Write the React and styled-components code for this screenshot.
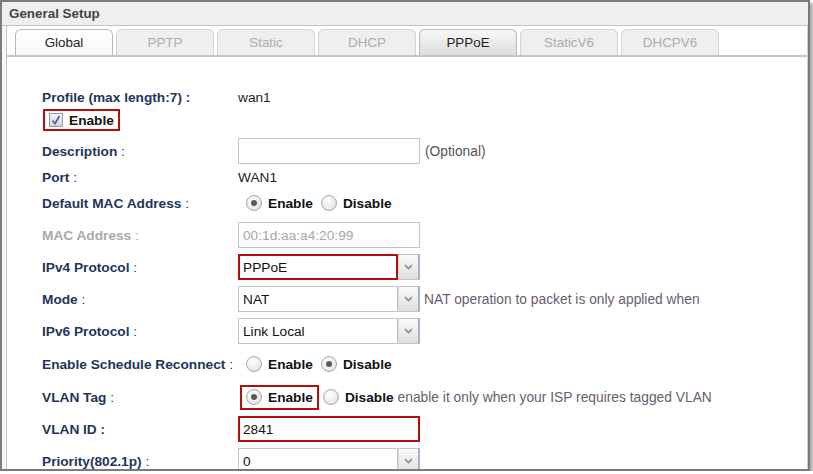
import React from "react"
import styled, { createGlobalStyle } from "styled-components"

const GlobalStyle = createGlobalStyle`
  html, body {
    margin: 0;
    padding: 0;
    background: #ffffff;
    font-family: "Liberation Sans", Arial, sans-serif;
  }
`

const Frame = styled.div`
  box-sizing: border-box;
  width: 810px;
  height: 471px;
  border: 2px solid #7b7b7b;
  box-shadow: 3px 3px 3px #a8a8a8;
  background: #f6f6f6;
  overflow: hidden;
  display: flex;
  flex-direction: column;
`

const TitleBar = styled.div`
  height: 23px;
  flex: none;
  background: #efefef;
  border-bottom: 1px solid #c2c2c2;
  padding-left: 7px;
  display: flex;
  align-items: center;
  font-size: 13.4px;
  font-weight: bold;
  color: #434343;
`

const Body = styled.div`
  flex: 1;
  margin-left: 4px;
  border-left: 1px solid #c9c9c9;
  border-right: 1px solid #d0d0d0;
  background: #ffffff;
`

const TabBar = styled.div`
  display: flex;
  gap: 3px;
  margin-top: 3px;
  padding-left: 8px;
  border-bottom: 2px solid #c6c6c6;
`

const Tab = styled.div`
  box-sizing: border-box;
  width: 98px;
  height: 26px;
  border: 1px solid ${p => (p.$on ? "#b8b8b8" : "#d4d4d4")};
  border-bottom: none;
  border-radius: 6px 6px 0 0;
  display: flex;
  align-items: center;
  justify-content: center;
  font-size: 13.4px;
  color: ${p => (p.$on ? "#1e1e1e" : "#adadad")};
  background: ${p =>
    p.$active
      ? "linear-gradient(#ffffff, #f7f7f7)"
      : p.$on
      ? "linear-gradient(#f8f8f8, #dcdcdc)"
      : "#efefef"};
`

const Form = styled.div`
  padding-left: 35px;
  padding-top: 30px;
`

const Row = styled.div`
  display: flex;
  align-items: center;
  height: ${p => p.$h || 26}px;
  margin-top: ${p => p.$top || 0}px;
`

const Label = styled.div`
  width: 196px;
  flex: none;
  font-size: 13.7px;
  font-weight: bold;
  color: ${p => (p.$off ? "#a9a9a9" : "#1f3559")};

  span {
    font-weight: normal;
  }
`

const Value = styled.div`
  font-size: 13.7px;
  color: #222;
`

const Hint = styled.span`
  font-size: 13.8px;
  color: ${p => p.$color || "#6a5c6e"};
  margin-left: ${p => p.$gap || 4}px;
  white-space: nowrap;
`

const Outline = styled.div`
  box-sizing: border-box;
  display: flex;
  align-items: center;
  height: ${p => p.$h || 22}px;
  padding: 0 4px;
  margin-left: ${p => p.$left || 0}px;
  border: 2px solid #b20f0f;
`

const TextBox = styled.div`
  box-sizing: border-box;
  width: ${p => p.$w || 182}px;
  height: ${p => p.$h || 26}px;
  border: ${p => (p.$red ? "2px solid #b20f0f" : "1px solid #c4c4c4")};
  padding-left: ${p => (p.$red ? 3 : 4)}px;
  display: flex;
  align-items: center;
  font-size: 13.7px;
  color: ${p => (p.$muted ? "#a6a6a6" : "#111")};
  background: #fff;
`

const SelectWrap = styled.div`
  display: flex;
  width: 182px;
  height: 26px;
`

const Arrow = styled.div`
  box-sizing: border-box;
  width: 22px;
  height: 26px;
  border: 1px solid #c4c4c4;
  border-left: 1px solid #d8d8d8;
  border-right: 2px solid #a9b0c4;
  background: linear-gradient(#fafafa, #dedede);
  display: flex;
  align-items: center;
  justify-content: center;
`

const Choice = styled.label`
  display: flex;
  align-items: center;
  gap: 6px;
  font-size: 13.7px;
  font-weight: bold;
  color: #111;
  margin-left: ${p => p.$left || 0}px;
  margin-right: ${p => p.$gap || 0}px;
`

const Radio = styled.span`
  box-sizing: border-box;
  width: 16px;
  height: 16px;
  border-radius: 50%;
  border: 1px solid #a8a8a8;
  background: radial-gradient(circle at 40% 35%, #ffffff, #dcdcdc);
  display: flex;
  align-items: center;
  justify-content: center;

  &::after {
    content: "";
    width: 6px;
    height: 6px;
    border-radius: 50%;
    background: ${p => (p.$checked ? "#5a5a5a" : "transparent")};
  }
`

const Check = styled.span`
  box-sizing: border-box;
  width: 14px;
  height: 14px;
  border: 1px solid #9a9a9a;
  background: linear-gradient(#f4f4f4, #d6d6d6);
  display: flex;
  align-items: center;
  justify-content: center;
`

const Chevron = () => (
  <svg width="9" height="6" viewBox="0 0 9 6">
    <path d="M1 1 L4.5 4.5 L8 1" fill="none" stroke="#8a8a8a" strokeWidth="1.6" />
  </svg>
)

const Select = ({ value, red }) => (
  <SelectWrap>
    <TextBox $w={160} $red={red}>{value}</TextBox>
    <Arrow>
      <Chevron />
    </Arrow>
  </SelectWrap>
)

const tabs = ["Global", "PPTP", "Static", "DHCP", "PPPoE", "StaticV6", "DHCPV6"]

export default function App() {
  return (
    <>
      <GlobalStyle />
      <Frame>
        <TitleBar>General Setup</TitleBar>
        <Body>
          <TabBar>
            {tabs.map(t => (
              <Tab key={t} $on={t === "Global" || t === "PPPoE"} $active={t === "Global"}>
                {t}
              </Tab>
            ))}
          </TabBar>

          <Form>
            <Row $h={20}>
              <Label>Profile (max length:7) :</Label>
              <Value>wan1</Value>
            </Row>
            <Row $h={22} $top={2}>
              <Outline $left={1} $h={22}>
                <Choice>
                  <Check>
                    <svg width="12" height="12" viewBox="0 0 12 12">
                      <path d="M2.5 6.5 L5 9.5 L9.5 2" fill="none" stroke="#4a5bb0" strokeWidth="1.6" />
                    </svg>
                  </Check>
                  Enable
                </Choice>
              </Outline>
            </Row>
            <Row $top={7}>
              <Label>
                Description <span>:</span>
              </Label>
              <TextBox />
              <Hint $color="#555" $gap={5}>(Optional)</Hint>
            </Row>
            <Row>
              <Label>
                Port <span>:</span>
              </Label>
              <Value>WAN1</Value>
            </Row>
            <Row>
              <Label>
                Default MAC Address <span>:</span>
              </Label>
              <Choice $left={8} $gap={8}>
                <Radio $checked />
                Enable
              </Choice>
              <Choice>
                <Radio />
                Disable
              </Choice>
            </Row>
            <Row $top={6}>
              <Label $off>
                MAC Address <span>:</span>
              </Label>
              <TextBox $muted>00:1d:aa:a4:20:99</TextBox>
            </Row>
            <Row $top={6}>
              <Label>
                IPv4 Protocol <span>:</span>
              </Label>
              <Select value="PPPoE" red />
            </Row>
            <Row $top={6}>
              <Label>
                Mode <span>:</span>
              </Label>
              <Select value="NAT" />
              <Hint>NAT operation to packet is only applied when</Hint>
            </Row>
            <Row $top={6}>
              <Label>
                IPv6 Protocol <span>:</span>
              </Label>
              <Select value="Link Local" />
            </Row>
            <Row $top={7}>
              <Label>
                Enable Schedule Reconnect <span>:</span>
              </Label>
              <Choice $left={8} $gap={8}>
                <Radio />
                Enable
              </Choice>
              <Choice>
                <Radio $checked />
                Disable
              </Choice>
            </Row>
            <Row $top={7}>
              <Label>
                VLAN Tag <span>:</span>
              </Label>
              <Outline $left={2} $h={25}>
                <Choice>
                  <Radio $checked />
                  Enable
                </Choice>
              </Outline>
              <Choice $left={4}>
                <Radio />
                Disable
              </Choice>
              <Hint>enable it only when your ISP requires tagged VLAN</Hint>
            </Row>
            <Row $top={6}>
              <Label>VLAN ID :</Label>
              <TextBox $red>2841</TextBox>
            </Row>
            <Row $top={6}>
              <Label>
                Priority(802.1p) <span>:</span>
              </Label>
              <Select value="0" />
            </Row>
          </Form>
        </Body>
      </Frame>
    </>
  )
}
